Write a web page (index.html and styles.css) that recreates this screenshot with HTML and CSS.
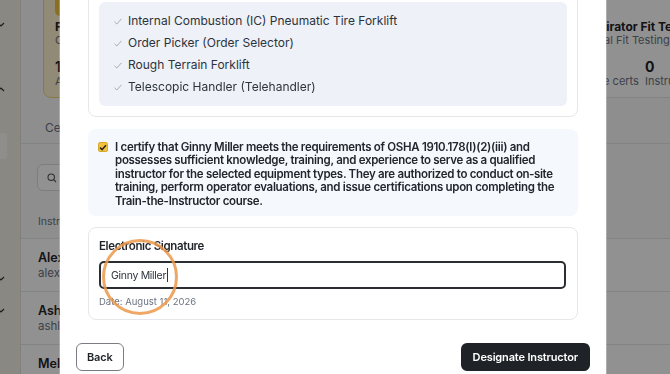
FILE: index.html
```html
<!DOCTYPE html>
<html lang="en">
<head>
  <meta charset="UTF-8" />
  <meta name="viewport" content="width=device-width, initial-scale=1.0"/>
  <title>Designate Instructor</title>
  <link rel="stylesheet" href="styles.css">
</head>
<body>
  <div class="app">
    <aside class="sidebar">
      <div class="nav-item"><svg width="8" height="8" viewBox="0 0 8 8"><path d="M-2 2 L1 5 L4 2" fill="none" stroke="#333" stroke-width="1.2"/></svg></div>
      <div class="nav-item nav-gap"><svg width="8" height="8" viewBox="0 0 8 8"><path d="M-2 5 L1 2 L4 5" fill="none" stroke="#333" stroke-width="1.2"/></svg></div>
      <div class="nav-item nav-active"></div>
      <div class="nav-item nav-far"><svg width="8" height="8" viewBox="0 0 8 8"><path d="M-2 2 L1 5 L4 2" fill="none" stroke="#333" stroke-width="1.2"/></svg></div>
      <div class="nav-item"><svg width="8" height="8" viewBox="0 0 8 8"><path d="M-2 2 L1 5 L4 2" fill="none" stroke="#333" stroke-width="1.2"/></svg></div>
    </aside>

    <main class="main">
      <div class="stats">
        <div class="stat-card stat-active">
          <div class="stat-icon"></div>
          <div class="stat-title">Forklift Operator</div>
          <div class="stat-sub">Certification Program</div>
          <div class="stat-nums">
            <div><div class="num">1</div><div class="num-label">Active certs</div></div>
            <div><div class="num">1</div><div class="num-label">Instructors</div></div>
          </div>
        </div>
        <div class="stat-card">
          <div class="stat-icon stat-icon-gray"></div>
          <div class="stat-title">Aerial Lift</div>
          <div class="stat-sub">Certification Program</div>
          <div class="stat-nums">
            <div><div class="num">0</div><div class="num-label">Active certs</div></div>
            <div><div class="num">0</div><div class="num-label">Instructors</div></div>
          </div>
        </div>
        <div class="stat-card">
          <div class="stat-icon stat-icon-gray"></div>
          <div class="stat-title">Hazard Communication</div>
          <div class="stat-sub">Annual Training</div>
          <div class="stat-nums">
            <div><div class="num">0</div><div class="num-label">Active certs</div></div>
            <div><div class="num">0</div><div class="num-label">Instructors</div></div>
          </div>
        </div>
        <div class="stat-card">
          <div class="stat-icon stat-icon-gray"></div>
          <div class="stat-title">Respirator Fit Testing</div>
          <div class="stat-sub">Annual Fit Testing</div>
          <div class="stat-nums">
            <div><div class="num">0</div><div class="num-label">Active certs</div></div>
            <div><div class="num">0</div><div class="num-label">Instructors</div></div>
          </div>
        </div>
      </div>

      <div class="tabs">
        <div class="tab">Certified Instructors</div>
      </div>

      <div class="search">
        <svg width="10" height="10" viewBox="0 0 10 10"><circle cx="4.2" cy="4.2" r="3.2" fill="none" stroke="#555" stroke-width="1.1"/><path d="M6.6 6.6 L9 9" stroke="#555" stroke-width="1.1"/></svg>
        <span>Search instructors</span>
      </div>

      <div class="table">
        <div class="table-head">Instructor</div>
        <div class="table-row">
          <div class="row-name">Alex Turner</div>
          <div class="row-email">alex.turner@example.com</div>
        </div>
        <div class="table-row">
          <div class="row-name">Ashley Grant</div>
          <div class="row-email">ashley.grant@example.com</div>
        </div>
        <div class="table-row">
          <div class="row-name">Melody Hart</div>
          <div class="row-email">melody.hart@example.com</div>
        </div>
      </div>
    </main>
  </div>

  <div class="backdrop"></div>

  <div class="modal">
    <div class="modal-body">
      <div class="card equip-card">
        <ul class="equip-list">
          <li><svg class="tick" width="8" height="7" viewBox="0 0 8 7"><path d="M0.5 3.8 L2.8 6 L7.5 0.8" fill="none" stroke="#a3aab5" stroke-width="1"/></svg>Internal Combustion (IC) Pneumatic Tire Forklift</li>
          <li><svg class="tick" width="8" height="7" viewBox="0 0 8 7"><path d="M0.5 3.8 L2.8 6 L7.5 0.8" fill="none" stroke="#a3aab5" stroke-width="1"/></svg>Order Picker (Order Selector)</li>
          <li><svg class="tick" width="8" height="7" viewBox="0 0 8 7"><path d="M0.5 3.8 L2.8 6 L7.5 0.8" fill="none" stroke="#a3aab5" stroke-width="1"/></svg>Rough Terrain Forklift</li>
          <li><svg class="tick" width="8" height="7" viewBox="0 0 8 7"><path d="M0.5 3.8 L2.8 6 L7.5 0.8" fill="none" stroke="#a3aab5" stroke-width="1"/></svg>Telescopic Handler (Telehandler)</li>
        </ul>
      </div>

      <div class="certify">
        <span class="checkbox"><svg width="8" height="7" viewBox="0 0 8 7"><path d="M1 3.6 L3.1 5.6 L7 1.2" fill="none" stroke="#2b2616" stroke-width="1.5"/></svg></span>
        <p>I certify that Ginny Miller meets the requirements of OSHA 1910.178(l)(2)(iii) and possesses sufficient knowledge, training, and experience to serve as a qualified instructor for the selected equipment types. They are authorized to conduct on&#8209;site training, perform operator evaluations, and issue certifications upon completing the Train-the-Instructor course.</p>
      </div>

      <div class="card sign-card">
        <div class="sign-label">Electronic Signature</div>
        <div class="sign-input">Ginny Miller<span class="caret"></span></div>
        <div class="sign-date">Date: August 11, 2026</div>
      </div>
    </div>

    <div class="modal-footer">
      <button class="btn btn-outline">Back</button>
      <button class="btn btn-dark">Designate Instructor</button>
    </div>
  </div>

  <div class="click-ring"></div>
</body>
</html>
```

FILE: styles.css
```css
:root {
  --text-main: #1f2328;
  --text-muted: #6b7280;
  --border-color: #e5e7eb;
  --list-bg: #eef1f8;
  --certify-bg: #f5f8fd;
  --accent-yellow: #f3c33f;
}

* {
  margin: 0;
  padding: 0;
  box-sizing: border-box;
}

body {
  font-family: 'Inter', sans-serif;
  color: var(--text-main);
  background: #fafafa;
  overflow: hidden;
  height: 100vh;
}

/* ---- background app ---- */
.app {
  display: flex;
  height: 100vh;
  overflow: hidden;
}

.sidebar {
  width: 21px;
  flex-shrink: 0;
  background: #f1efe6;
  border-right: 1px solid #e4e2d8;
  padding-top: 21px;
}

.nav-item {
  height: 8px;
  display: flex;
}

.nav-gap {
  margin-top: 57px;
}

.nav-active {
  margin-top: 39px;
  height: 26px;
  width: 7px;
  background: #fbfaf5;
  border-radius: 0 4px 4px 0;
}

.nav-far {
  margin-top: 116px;
  margin-bottom: 24px;
}

.main {
  flex: 1;
  padding-left: 16px;
  background: #fafafa;
}

.stats {
  display: grid;
  grid-template-columns: repeat(4, 162px);
  gap: 12px;
  margin: -20px 0 0 6px;
}

.stat-card {
  background: #fff;
  border: 1px solid var(--border-color);
  border-radius: 8px;
  padding: 11px 11px 9px;
  white-space: nowrap;
}

.stat-active {
  background: #fdf3d0;
  border-color: #f0d77d;
}

.stat-icon {
  width: 24px;
  height: 24px;
  border-radius: 5px;
  background: var(--accent-yellow);
  margin-bottom: 4px;
}

.stat-icon-gray {
  background: #eceef2;
}

.stat-title {
  font-size: 12px;
  font-weight: 700;
  line-height: 14px;
}

.stat-sub {
  font-size: 11px;
  color: var(--text-muted);
  line-height: 13px;
}

.stat-nums {
  display: flex;
  gap: 6px;
  margin-top: 13px;
}

.num {
  font-size: 14px;
  font-weight: 700;
  line-height: 14px;
}

.num-label {
  font-size: 11px;
  color: var(--text-muted);
  line-height: 14px;
}

.tabs {
  height: 46px;
  padding: 22px 0 0 24px;
  border-bottom: 1px solid var(--border-color);
  margin-left: -16px;
}

.tab {
  font-size: 12px;
  color: var(--text-muted);
}

.search {
  margin-top: 20px;
  width: 240px;
  height: 27px;
  border: 1px solid #d9dce1;
  border-radius: 6px;
  background: #fff;
  display: flex;
  align-items: center;
  gap: 6px;
  padding-left: 9px;
  font-size: 11px;
  color: #9ca3af;
}

.table {
  margin-top: 14px;
  margin-left: -16px;
}

.table-head {
  height: 34px;
  padding: 10px 0 0 17px;
  font-size: 10.5px;
  color: var(--text-muted);
  border-bottom: 1px solid var(--border-color);
}

.table-row {
  padding: 10px 0 10px 17px;
  border-bottom: 1px solid var(--border-color);
  background: #fff;
}

.row-name {
  font-size: 12.5px;
  font-weight: 600;
  line-height: 17px;
}

.row-email {
  font-size: 11.5px;
  color: var(--text-muted);
  line-height: 15px;
}

.backdrop {
  position: fixed;
  inset: 0;
  background: rgba(0, 0, 0, 0.43);
}

/* ---- modal ---- */
.modal {
  position: fixed;
  top: 0;
  left: 60px;
  width: 546px;
  height: 100vh;
  background: #fff;
  overflow: hidden;
  box-shadow: 0 0 0 1px rgba(255, 255, 255, 0.25);
}

.modal-body {
  padding: 0 28px;
  margin-top: -9px;
}

.card {
  border: 1px solid var(--border-color);
  border-radius: 8px;
  background: #fff;
}

.equip-card {
  padding: 10px;
}

.equip-list {
  list-style: none;
  background: var(--list-bg);
  border-radius: 6px;
  padding: 8px 15px;
}

.equip-list li {
  display: flex;
  align-items: center;
  gap: 6px;
  font-size: 12px;
  line-height: 22px;
  color: #2d333b;
}

.tick {
  flex-shrink: 0;
}

.certify {
  margin-top: 12px;
  background: var(--certify-bg);
  border-radius: 8px;
  padding: 12px 10px 8px;
  display: flex;
  gap: 7px;
}

.checkbox {
  flex-shrink: 0;
  width: 10px;
  height: 10px;
  margin-top: 1px;
  border-radius: 2px;
  background: var(--accent-yellow);
  border: 1px solid #d9a92a;
  display: flex;
  align-items: center;
  justify-content: center;
}

.certify p {
  font-size: 11.5px;
  font-weight: 600;
  line-height: 13.4px;
  letter-spacing: -0.3px;
  color: #22272e;
}

.sign-card {
  margin-top: 11px;
  padding: 10px 11px 11px 10px;
}

.sign-label {
  font-size: 11.5px;
  font-weight: 600;
  line-height: 17px;
  letter-spacing: -0.35px;
  margin-bottom: 6px;
}

.sign-input {
  height: 28px;
  border: 2px solid #2a2d31;
  border-radius: 5px;
  padding: 0 10px;
  display: flex;
  align-items: center;
  font-size: 10.5px;
  letter-spacing: -0.3px;
  color: #2d333b;
}

.caret {
  width: 1px;
  height: 14px;
  background: #2d333b;
  margin-left: 1px;
}

.sign-date {
  margin-top: 6px;
  font-size: 9.5px;
  line-height: 13px;
  color: var(--text-muted);
}

.modal-footer {
  display: flex;
  justify-content: space-between;
  padding: 23px 16px 16px;
}

.btn {
  height: 28px;
  border-radius: 6px;
  font-family: 'Inter', sans-serif;
  font-size: 11px;
  font-weight: 600;
  letter-spacing: -0.15px;
  cursor: pointer;
}

.btn-outline {
  background: #fff;
  color: var(--text-main);
  border: 1px solid #7a7d82;
  padding: 0 10px;
}

.btn-dark {
  background: #1f2327;
  color: #fff;
  border: none;
  padding: 0 12px;
}

/* click highlight drawn over the screenshot */
.click-ring {
  position: fixed;
  left: 102px;
  top: 239px;
  width: 76px;
  height: 76px;
  border-radius: 50%;
  border: 3px solid rgba(236, 152, 74, 0.85);
}
```
